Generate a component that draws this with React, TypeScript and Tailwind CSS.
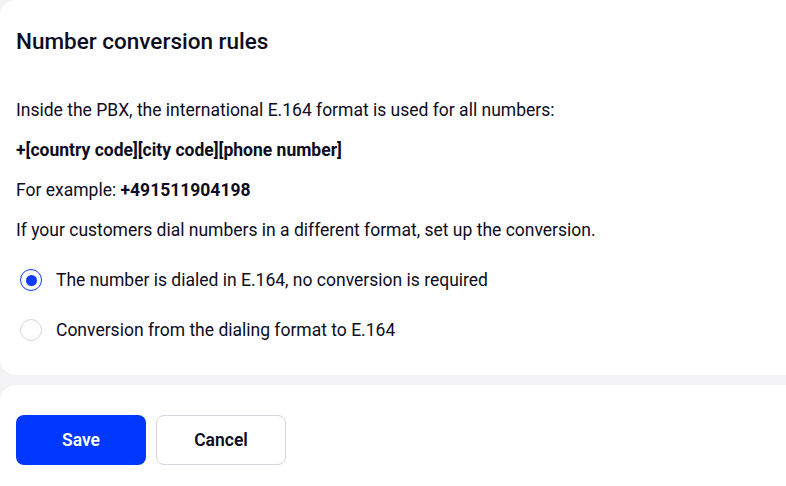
import React, { useState } from "react";

export default function App() {
  const [choice, setChoice] = useState(0);
  const options = [
    "The number is dialed in E.164, no conversion is required",
    "Conversion from the dialing format to E.164",
  ];
  return (
    <div
      className="w-[786px] h-[486px] overflow-hidden bg-[#f3f3f5] text-[#0c0c22]"
      style={{ fontFamily: "Roboto, 'Noto Sans', Arial, sans-serif" }}
    >
      <div className="flex flex-col gap-[10px]">
        <section className="bg-white rounded-l-[16px] pl-4 pt-[27px] pb-[33px]">
          <h2 className="text-[22.5px] leading-[28px] font-medium">
            Number conversion rules
          </h2>
          <div className="mt-[43px] flex flex-col gap-4 text-[17.5px] leading-6">
            <p>Inside the PBX, the international E.164 format is used for all numbers:</p>
            <p className="font-bold">+[country code][city code][phone number]</p>
            <p>
              For example: <span className="font-bold">+491511904198</span>
            </p>
            <p>If your customers dial numbers in a different format, set up the conversion.</p>
          </div>
          <div className="mt-[26px] flex flex-col gap-[26px] text-[17.5px] leading-6">
            {options.map((o, i) => (
              <label key={i} className="flex items-center gap-[14px] pl-1 cursor-pointer" onClick={() => setChoice(i)}>
                <span
                  className={
                    i === choice
                      ? "w-[22px] h-[22px] rounded-full border-[1.5px] border-[#0a3cff] flex items-center justify-center"
                      : "w-[22px] h-[22px] rounded-full border-[1.5px] border-[#d6d6de]"
                  }
                >
                  {i === choice && <span className="w-[11px] h-[11px] rounded-full bg-[#0a3cff]" />}
                </span>
                <span>{o}</span>
              </label>
            ))}
          </div>
        </section>
        <section className="bg-white rounded-tl-[16px] pl-4 pt-[30px] h-[120px]">
          <div className="flex gap-[10px]">
            <button className="w-[130px] h-[50px] rounded-[8px] bg-[#0038ff] text-white text-[17.5px] font-semibold">
              Save
            </button>
            <button className="w-[130px] h-[50px] rounded-[8px] bg-white border border-[#d6d6de] text-[#0c0c22] text-[17.5px] font-semibold">
              Cancel
            </button>
          </div>
        </section>
      </div>
    </div>
  );
}
